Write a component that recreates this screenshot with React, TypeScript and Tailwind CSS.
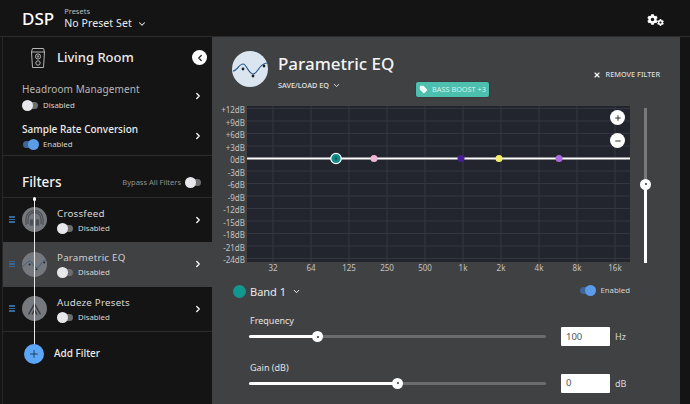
import { ChevronDown, ChevronLeft, ChevronRight, Minus, Plus, Tag, X } from "lucide-react";
import { FaCog } from "react-icons/fa";

const DB_LABELS = ["+12dB", "+9dB", "+6dB", "+3dB", "0dB", "-3dB", "-6dB", "-9dB", "-12dB", "-15dB", "-18dB", "-21dB", "-24dB"];
const FREQ_LABELS = ["32", "64", "125", "250", "500", "1k", "2k", "4k", "8k", "16k"];
const BANDS = [
  { x: 127, color: "#f0b4d4" },
  { x: 214, color: "#4b1d96" },
  { x: 252, color: "#f5ee6a" },
  { x: 312, color: "#ad6ae0" },
];

function Toggle({ on }: { on?: boolean }) {
  return (
    <span className={`relative inline-block h-[7px] w-[15px] shrink-0 rounded-full ${on ? "bg-[#3f6696]" : "bg-[#6e6e6e]"}`}>
      <span className={`absolute top-[-2px] h-[11px] w-[11px] rounded-full ${on ? "right-[-1px] bg-[#5b9ce8]" : "left-[-1px] bg-[#e8e8ec]"}`} />
    </span>
  );
}

function Status({ on, className }: { on?: boolean; className?: string }) {
  return (
    <div className={`flex items-center gap-[5px] text-[7.800px] leading-none text-[#d4d4d4] ${className ?? ""}`}>
      <Toggle on={on} />
      {on ? "Enabled" : "Disabled"}
    </div>
  );
}

function SpeakerIcon() {
  return (
    <svg width="16" height="22" viewBox="0 0 16 22" fill="none" stroke="#b5b5b5" strokeWidth="1">
      <path d="M2.500 1.500h11l1 3.500-1 15.500h-11l-1-15.500z" />
      <path d="M1.800 5h12.400" />
      <circle cx="8" cy="9.500" r="2.600" />
      <circle cx="8" cy="9.500" r="0.800" />
      <circle cx="8" cy="16" r="2.200" />
    </svg>
  );
}

function EqCurve({ stroke, dot }: { stroke: string; dot: string }) {
  return (
    <svg viewBox="0 0 36 36" className="h-full w-full" fill="none">
      <path d="M1 20c4 0 6-7 10-7s5 10 10 10 6-11 14-11" stroke={stroke} strokeWidth="1.200" />
      <circle cx="11" cy="18" r="1.400" fill={dot} />
      <circle cx="21" cy="25" r="1.400" fill={dot} />
      <circle cx="32" cy="15" r="1.400" fill={dot} />
    </svg>
  );
}

function HeadphoneIcon() {
  return (
    <svg viewBox="0 0 25 25" className="h-full w-full" fill="none" stroke="#4e5155" strokeWidth="1.300">
      <path d="M6 17v-5a6.500 6.500 0 0 1 13 0v5" />
      <path d="M4 18v-6a8.500 8.500 0 0 1 17 0v6" />
      <rect x="8.500" y="13" width="2" height="5" fill="#4e5155" />
      <rect x="14.500" y="13" width="2" height="5" fill="#4e5155" />
    </svg>
  );
}

function AudezeIcon() {
  return (
    <svg viewBox="0 0 25 25" className="h-full w-full" fill="none" stroke="#3a3c40" strokeWidth="1.500">
      <path d="M6.500 18.500 12.500 8l6 10.500" />
      <path d="M10 18.500 12.500 14l2.500 4.500" />
    </svg>
  );
}

function FilterRow({ name, active, tall, icon }: { name: string; active?: boolean; tall?: boolean; icon: React.ReactNode }) {
  return (
    <div className={`flex items-center pb-[1px] pl-[6px] pr-[9px] ${tall ? "h-[45px]" : "h-[44px]"} ${active ? "bg-[#404143]" : ""}`}>
      <div className="flex w-[6px] flex-col gap-[1px]">
        <span className="h-[1.500px] bg-[#35699a]" />
        <span className="h-[1.500px] bg-[#35699a]" />
        <span className="h-[1.500px] bg-[#35699a]" />
      </div>
      <div className="ml-[7px] h-[25px] w-[25px] overflow-hidden rounded-full bg-[#75787c]">{icon}</div>
      <div className="ml-[10px] flex-1">
        <div className={`text-[9.800px] leading-[14px] tracking-[0.2px] ${active ? "text-[#cfcfcf]" : "text-[#d8d8d8]"}`}>{name}</div>
        <Status className="mt-[4px] ml-[1px]" />
      </div>
      <ChevronRight size={10} strokeWidth={3} className="text-white" />
    </div>
  );
}

function EqChart() {
  return (
    <svg width="383" height="156" viewBox="0 0 383 156" className="block">
      <rect width="383" height="156" fill="#22252e" />
      {DB_LABELS.map((d, i) => (
        <line key={d} x1="0" x2="383" y1={2.5 + i * 12.5} y2={2.5 + i * 12.5} stroke="#343740" strokeWidth="1" />
      ))}
      {FREQ_LABELS.map((f, i) => (
        <line key={f} x1={26 + i * 38} x2={26 + i * 38} y1="0" y2="156" stroke="#343740" strokeWidth="1" />
      ))}
      <line x1="0" x2="383" y1="52.500" y2="52.500" stroke="#ffffff" strokeWidth="2" />
      <circle cx="89" cy="52.500" r="5.200" fill="#0f8a86" stroke="#ffffff" strokeWidth="1.200" />
      <circle cx="89" cy="52.500" r="1" fill="#10302f" />
      {BANDS.map((b) => (
        <circle key={b.x} cx={b.x} cy="52.500" r="3.500" fill={b.color} />
      ))}
    </svg>
  );
}

function SliderRow({ label, pct, value, unit }: { label: string; pct: number; value: string; unit: string }) {
  return (
    <div className="flex items-end">
      <div className="w-[297px]">
        <div className="-mt-px pl-[1px] text-[9px] leading-[13px] text-[#e2e2e2]">{label}</div>
        <div className="relative mt-[8px] mb-[8px] h-[3px] rounded-full bg-[#6b6c6e]">
          <div className="h-full rounded-full bg-white" style={{ width: `${pct}%` }} />
          <div className="absolute top-[-4px] ml-[-5.500px] flex h-[11px] w-[11px] items-center justify-center rounded-full bg-white" style={{ left: `${pct}%` }}>
            <span className="h-[2px] w-[2px] rounded-full bg-[#333]" />
          </div>
        </div>
      </div>
      <div className="ml-[15px] flex h-[19px] w-[49px] items-center rounded-[1px] bg-white pl-[5px] pt-[1px] text-[9.500px] text-[#555]">{value}</div>
      <div className="mb-[3px] ml-[5px] text-[9px] leading-[13px] text-[#d8d8d8]">{unit}</div>
    </div>
  );
}

export default function App() {
  return (
    <div className="flex h-[404px] w-[690px] flex-col overflow-hidden bg-[#141414] font-['Noto_Sans',sans-serif] text-white">
      <header className="flex h-[37px] shrink-0 items-center border-b border-[#2b2b2b] pl-[22px] pr-[26px]">
        <div className="text-[17px] font-medium leading-none">DSP</div>
        <div className="ml-[10px] mt-[1px]">
          <div className="text-[7.500px] leading-[10px] text-[#bdbdbd]">Presets</div>
          <div className="flex items-center gap-[5px] text-[10.500px] leading-[15px] tracking-[0.1px] text-[#ececec]">
            No Preset Set
            <ChevronDown size={10} strokeWidth={2.5} />
          </div>
        </div>
        <div className="ml-auto flex items-start pt-[3px]">
          <FaCog size={11} />
          <FaCog size={7} className="mt-[5px] ml-[-1px]" />
        </div>
      </header>

      <div className="flex min-h-0 flex-1">
        <aside className="relative ml-[2px] w-[210px] shrink-0 border-l border-[#262626]">
          <div className="h-[119px] border-b border-[#2b2b2b]">
            <div className="flex h-[41px] items-center pl-[27px] pr-[5px]">
              <SpeakerIcon />
              <div className="ml-[11px] flex-1 text-[13px] font-medium text-[#ececec]">Living Room</div>
              <div className="flex h-[15px] w-[15px] items-center justify-center rounded-full bg-white">
                <ChevronLeft size={10} strokeWidth={3} className="text-[#222]" />
              </div>
            </div>
            <div className="flex h-[36px] items-center pl-[19px] pr-[9px]">
              <div className="flex-1">
                <div className="text-[10px] leading-[14px] tracking-[0.1px] text-[#b8b8b8]">Headroom Management</div>
                <Status className="mt-[6px] ml-[1px]" />
              </div>
              <ChevronRight size={10} strokeWidth={3} />
            </div>
            <div className="mt-[3px] flex h-[35px] items-center pl-[19px] pr-[9px] pt-[2px]">
              <div className="flex-1">
                <div className="text-[10px] font-medium leading-[14px] text-[#ececec]">Sample Rate Conversion</div>
                <Status on className="mt-[5px] ml-[1px]" />
              </div>
              <ChevronRight size={10} strokeWidth={3} />
            </div>
          </div>
          <div className="flex h-[42px] items-center border-b border-[#2b2b2b] pl-[19px] pr-[11px] pt-[12px]">
            <div className="flex-1 text-[13.500px] font-medium text-[#f2f2f2]">Filters</div>
            <span className="mr-[5px] text-[7.500px] text-[#929292]">Bypass All Filters</span>
            <Toggle />
          </div>
          <FilterRow name="Crossfeed" icon={<HeadphoneIcon />} />
          <FilterRow name="Parametric EQ" active tall icon={<EqCurve stroke="#2a5d92" dot="#24262a" />} />
          <FilterRow name="Audeze Presets" icon={<AudezeIcon />} />
          <div className="flex h-[44px] items-center border-t border-[#2b2b2b] pl-[21px]">
            <div className="z-10 flex h-[20px] w-[20px] items-center justify-center rounded-full bg-[#5ba6f6]">
              <Plus size={12} strokeWidth={1.5} className="text-[#14263a]" />
            </div>
            <span className="ml-[10px] text-[10px] font-medium text-[#ececec]">Add Filter</span>
          </div>
          {/* line joining the filters, lies over the rows */}
          <div className="absolute left-[30.500px] top-[161px] h-[147px] w-[1.500px] bg-[#e6e6e6]" />
          <div className="absolute left-[29.500px] top-[160px] h-[3.500px] w-[3.500px] rounded-full bg-white" />
        </aside>

        <main className="flex w-[468px] shrink-0 flex-col bg-[#404143] pl-[20px] pr-[20px] pt-[14px]">
          <div className="flex h-[55px] shrink-0 items-start">
            <div className="h-[36px] w-[36px] overflow-hidden rounded-full bg-[#dbe5f0]">
              <EqCurve stroke="#2a5d92" dot="#1d1f24" />
            </div>
            <div className="ml-[10px] w-[138px]">
              <div className="text-[17px] font-medium leading-[26px] text-[#f4f4f4]">Parametric EQ</div>
              <div className="mt-[3px] flex items-center gap-[3px] text-[7.300px] font-medium leading-[11px] text-[#e4e4e4]">
                SAVE/LOAD EQ
                <ChevronDown size={9} strokeWidth={2.5} />
              </div>
            </div>
            <div className="mt-[31px] flex h-[15px] w-[73px] items-center justify-center gap-[4px] rounded-[2px] bg-[#4cbfae] text-[7.300px] text-[#d6f3ee] shadow-[0_0_0_1px_#3a3b3d]">
              <Tag size={9} fill="#eefaf8" strokeWidth={0} />
              BASS BOOST +3
            </div>
            <div className="ml-auto mt-[18px] flex items-center gap-[5px] text-[7.300px] font-medium leading-[11px] text-[#dcdcdc]">
              <X size={8} strokeWidth={3.5} className="text-white" />
              REMOVE FILTER
            </div>
          </div>

          <div className="flex shrink-0">
            <div className="w-[15px] shrink-0">
              <div className="ml-[-17px] mt-[-2px] w-[30px]">
                {DB_LABELS.map((d) => (
                  <div key={d} className="h-[12.500px] text-right text-[8px] leading-[12.500px] text-[#c2c2c2]">{d}</div>
                ))}
              </div>
            </div>
            <div className="relative w-[383px]">
              <EqChart />
              <div className="absolute right-[5px] top-[4px] flex h-[15px] w-[15px] items-center justify-center rounded-full bg-white">
                <Plus size={8} strokeWidth={3} className="text-[#333]" />
              </div>
              <div className="absolute right-[5px] top-[27px] flex h-[15px] w-[15px] items-center justify-center rounded-full bg-white">
                <Minus size={8} strokeWidth={3} className="text-[#333]" />
              </div>
              <div className="flex h-[12px] pl-[7px]">
                {FREQ_LABELS.map((f) => (
                  <div key={f} className="w-[38px] shrink-0 text-center text-[8px] leading-[12px] text-[#c2c2c2]">{f}</div>
                ))}
              </div>
            </div>
            <div className="relative ml-[14px] mt-[2px] h-[155px] w-[3px] bg-[#78797b]">
              <div className="absolute bottom-0 left-0 top-[76px] w-full bg-white" />
              <div className="absolute left-[-4px] top-[70.500px] flex h-[11px] w-[11px] items-center justify-center rounded-full bg-white">
                <span className="h-[2px] w-[2px] rounded-full bg-[#333]" />
              </div>
            </div>
          </div>

          <div className="mt-[10px] flex h-[14px] shrink-0 items-center pl-[1px] pr-[30px]">
            <span className="h-[13px] w-[13px] rounded-full bg-[#12978f]" />
            <span className="ml-[4px] text-[11px] leading-none text-[#eaeaea]">Band 1</span>
            <ChevronDown size={9} strokeWidth={2.5} className="ml-[6px]" />
            <Status on className="ml-auto" />
          </div>
          <div className="ml-[17px] mt-[17px] flex flex-col gap-[15.500px]">
            <SliderRow label="Frequency" pct={23.2} value="100" unit="Hz" />
            <SliderRow label="Gain (dB)" pct={50} value="0" unit="dB" />
          </div>
        </main>
        <div className="flex-1 bg-[#141414]" />
      </div>
    </div>
  );
}
